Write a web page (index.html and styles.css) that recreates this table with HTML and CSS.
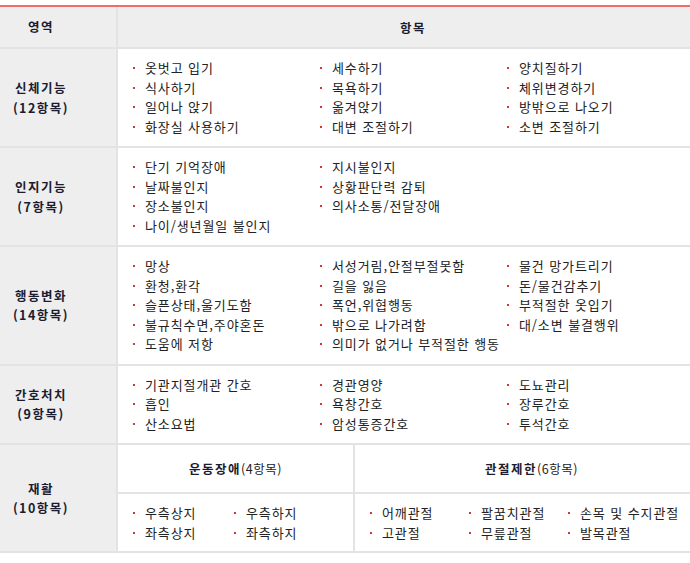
FILE: index.html
```html
<!DOCTYPE html>
<html lang="ko">
<head>
<meta charset="utf-8">
<link rel="stylesheet" href="styles.css">
</head>
<body>
<div class="frame">
  <div class="sheet">
    <div class="row head">
      <div class="label">영역</div>
      <div class="title">항목</div>
    </div>

    <div class="row">
      <div class="label">신체기능<br>(12항목)</div>
      <div class="content">
        <ul class="col">
          <li>옷벗고 입기</li><li>식사하기</li><li>일어나 앉기</li><li>화장실 사용하기</li>
        </ul>
        <ul class="col">
          <li>세수하기</li><li>목욕하기</li><li>옮겨앉기</li><li>대변 조절하기</li>
        </ul>
        <ul class="col">
          <li>양치질하기</li><li>체위변경하기</li><li>방밖으로 나오기</li><li>소변 조절하기</li>
        </ul>
      </div>
    </div>

    <div class="row">
      <div class="label">인지기능<br>(7항목)</div>
      <div class="content">
        <ul class="col">
          <li>단기 기억장애</li><li>날짜불인지</li><li>장소불인지</li><li>나이/생년월일 불인지</li>
        </ul>
        <ul class="col">
          <li>지시불인지</li><li>상황판단력 감퇴</li><li>의사소통/전달장애</li>
        </ul>
      </div>
    </div>

    <div class="row">
      <div class="label">행동변화<br>(14항목)</div>
      <div class="content">
        <ul class="col">
          <li>망상</li><li>환청,환각</li><li>슬픈상태,울기도함</li><li>불규칙수면,주야혼돈</li><li>도움에 저항</li>
        </ul>
        <ul class="col">
          <li>서성거림,안절부절못함</li><li>길을 잃음</li><li>폭언,위협행동</li><li>밖으로 나가려함</li><li>의미가 없거나 부적절한 행동</li>
        </ul>
        <ul class="col">
          <li>물건 망가트리기</li><li>돈/물건감추기</li><li>부적절한 옷입기</li><li>대/소변 불결행위</li>
        </ul>
      </div>
    </div>

    <div class="row">
      <div class="label">간호처치<br>(9항목)</div>
      <div class="content">
        <ul class="col">
          <li>기관지절개관 간호</li><li>흡인</li><li>산소요법</li>
        </ul>
        <ul class="col">
          <li>경관영양</li><li>욕창간호</li><li>암성통증간호</li>
        </ul>
        <ul class="col">
          <li>도뇨관리</li><li>장루간호</li><li>투석간호</li>
        </ul>
      </div>
    </div>

    <div class="row">
      <div class="label">재활<br>(10항목)</div>
      <div class="rehab">
        <div class="sub sub-left">
          <div class="subhead"><b>운동장애</b>(4항목)</div>
          <div class="sublist">
            <ul class="col narrow"><li>우측상지</li><li>좌측상지</li></ul>
            <ul class="col narrow"><li>우측하지</li><li>좌측하지</li></ul>
          </div>
        </div>
        <div class="sub sub-right">
          <div class="subhead"><b>관절제한</b>(6항목)</div>
          <div class="sublist">
            <ul class="col slim"><li>어깨관절</li><li>고관절</li></ul>
            <ul class="col slim"><li>팔꿈치관절</li><li>무릎관절</li></ul>
            <ul class="col slim"><li>손목 및 수지관절</li><li>발목관절</li></ul>
          </div>
        </div>
      </div>
    </div>
  </div>
</div>
</body>
</html>
```

FILE: styles.css
```css
html, body {
  margin: 0;
  padding: 0;
  background: #ffffff;
}

body {
  font-family: "Noto Sans CJK KR", "Noto Sans", sans-serif;
  font-size: 12px;
  color: #222222;
  overflow: hidden;
}

.frame {
  width: 690px;
  overflow: hidden;
  padding-top: 5px;
}

.sheet {
  width: 742px;
  margin-left: -34px;
  border-top: 2px solid #f06b6b;
}

.row {
  display: flex;
  border-bottom: 2px solid #e3e3e3;
}

.label {
  width: 150px;
  flex: none;
  background: #eeeeee;
  border-right: 2px solid #e3e3e3;
  display: flex;
  align-items: center;
  justify-content: center;
  text-align: center;
  font-size: 12.5px;
  font-weight: bold;
  color: #1c1c30;
  line-height: 19.5px;
  letter-spacing: 1.5px;
}

.head {
  height: 40px;
  background: #eeeeee;
}

.title {
  flex: 1;
  display: flex;
  align-items: center;
  justify-content: center;
  font-size: 12.5px;
  font-weight: bold;
  color: #1c1c30;
  letter-spacing: 1.5px;
}

.content {
  flex: 1;
  display: flex;
  padding: 9px 0 10px 15px;
  background: #fff;
}

.col {
  list-style: none;
  margin: 0;
  padding: 0;
  width: 187px;
  flex: none;
}

.col li {
  font-size: 13px;
  line-height: 19.5px;
  white-space: nowrap;
  letter-spacing: 0.9px;
}

.col li::before {
  content: "";
  display: inline-block;
  width: 2px;
  height: 2px;
  background: #d4343a;
  margin-right: 10px;
  vertical-align: middle;
  position: relative;
  top: -1px;
}

.rehab {
  flex: 1;
  display: flex;
  background: #fff;
}

.sub {
  display: flex;
  flex-direction: column;
}

.sub-left {
  width: 235px;
  flex: none;
  border-right: 2px solid #e3e3e3;
}

.sub-right {
  flex: 1;
}

.subhead {
  height: 47px;
  display: flex;
  align-items: center;
  justify-content: center;
  border-bottom: 2px solid #e3e3e3;
  font-size: 12.5px;
  color: #222222;
  letter-spacing: 0.5px;
}

.subhead b {
  color: #1c1c30;
  letter-spacing: 1.5px;
}

.sublist {
  display: flex;
  padding: 9px 0 9px 15px;
}

.col.narrow {
  width: 101px;
}

.col.slim {
  width: 99px;
}
```
